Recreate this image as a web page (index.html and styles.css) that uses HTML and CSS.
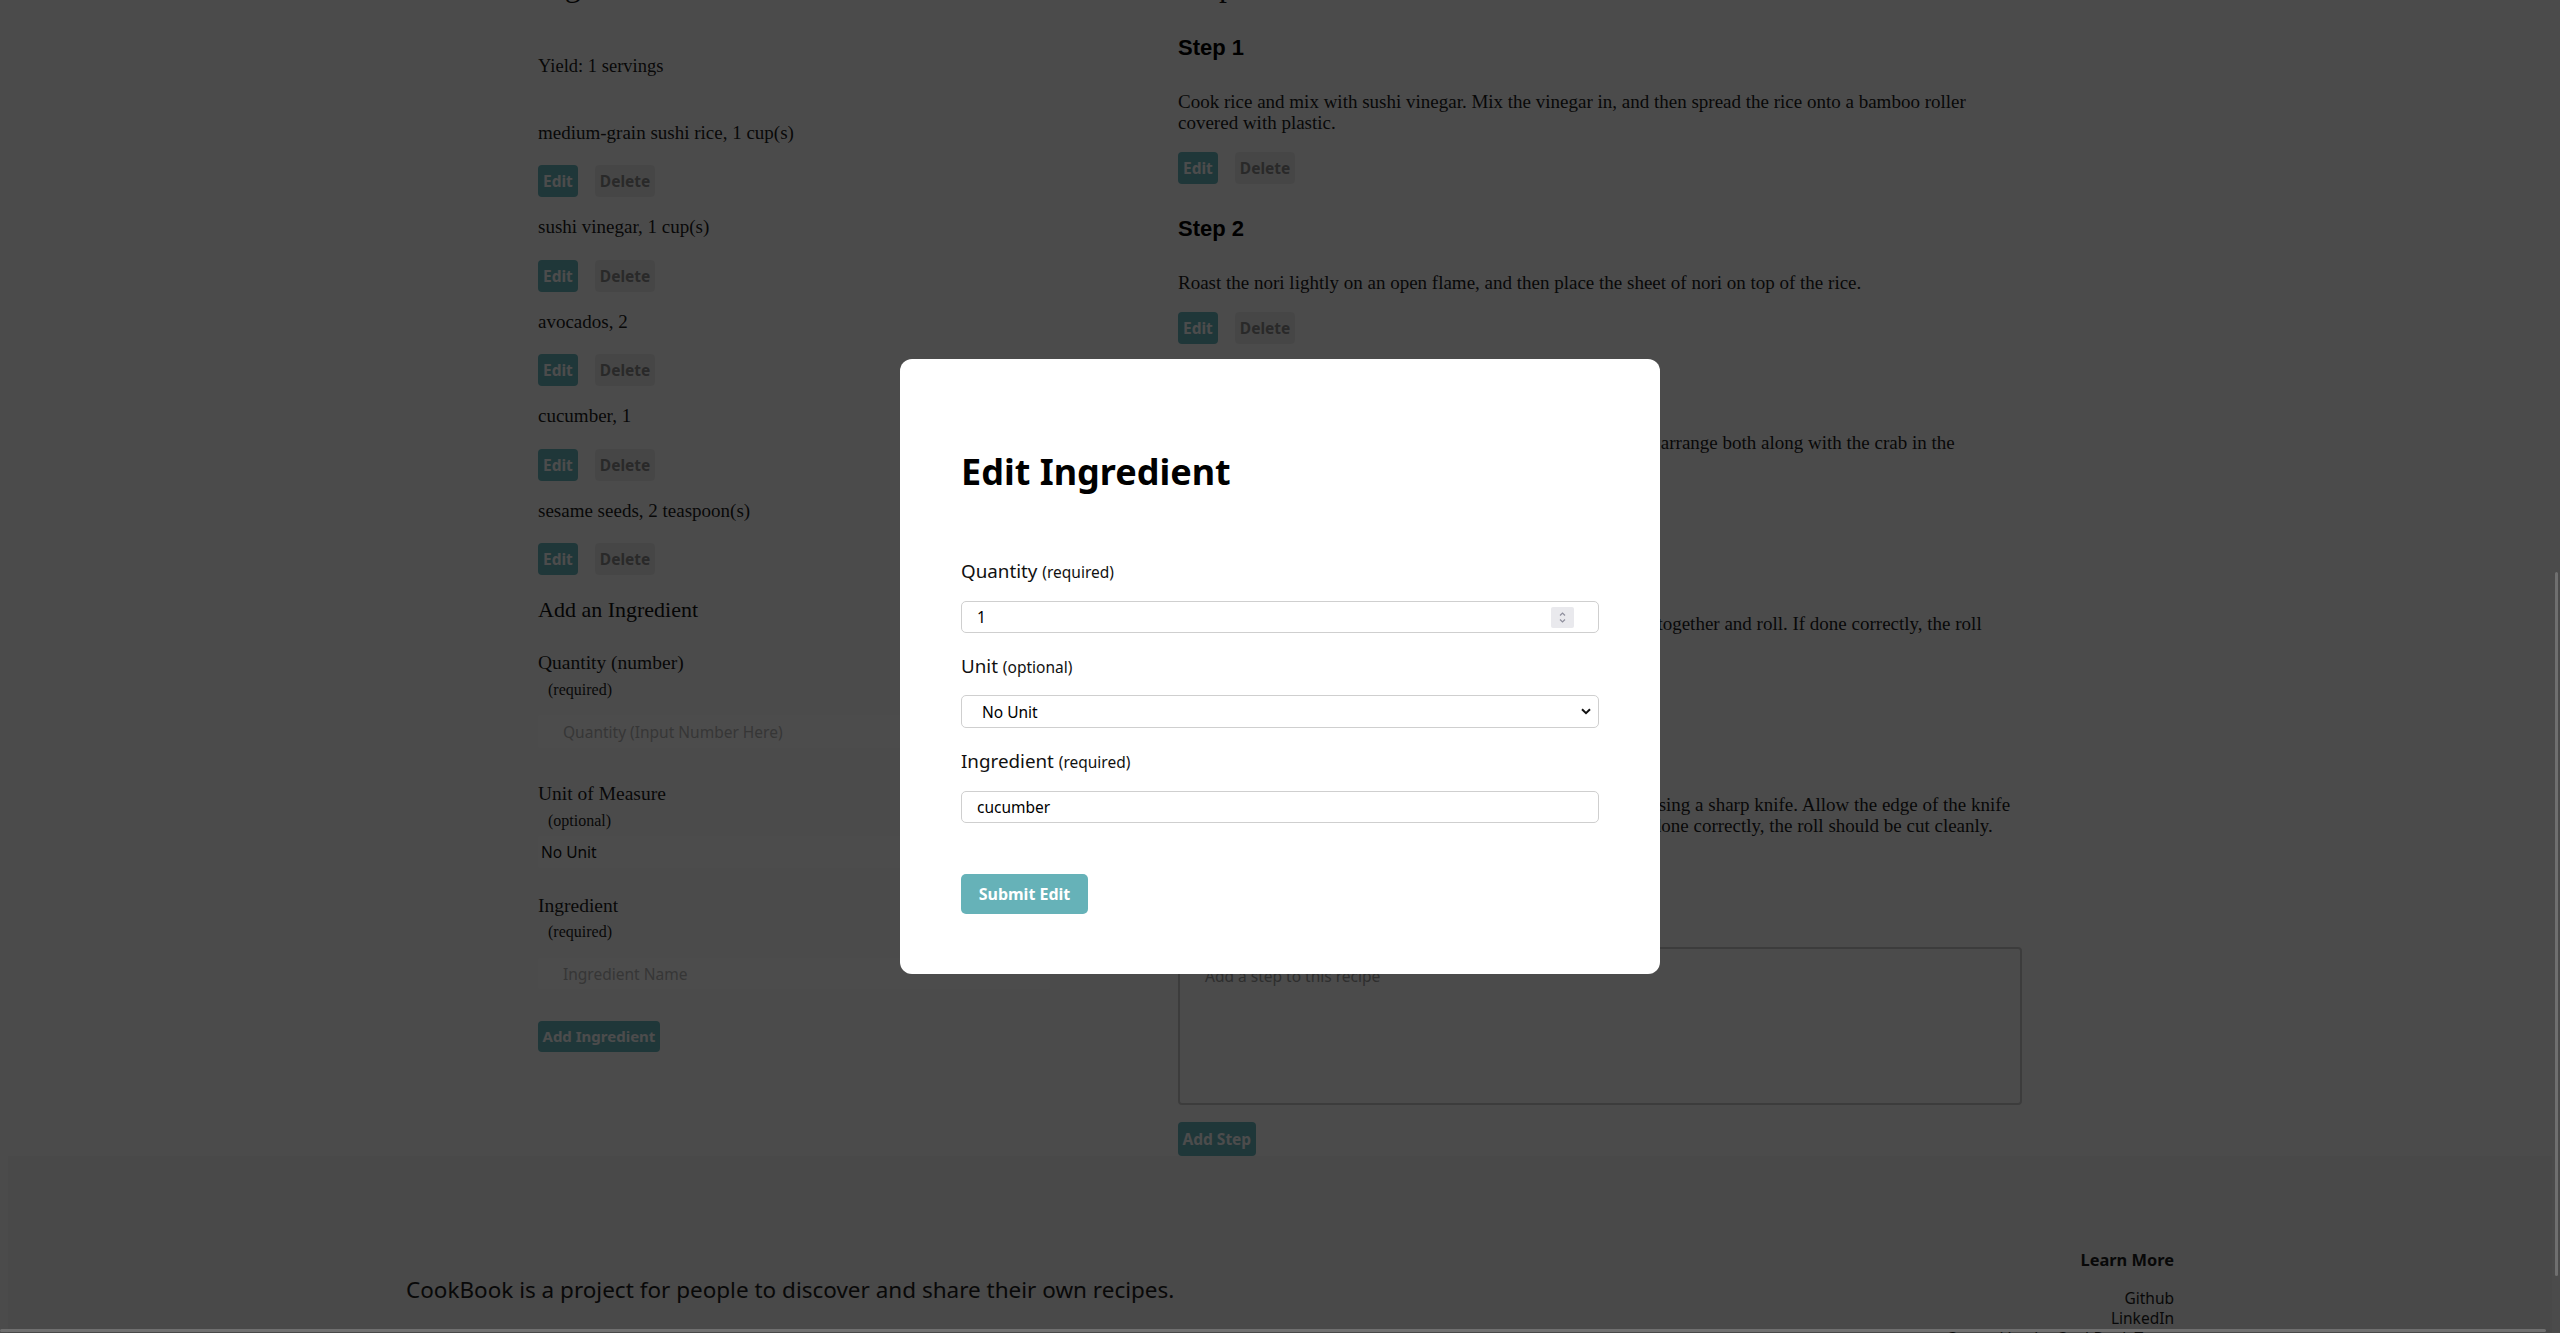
FILE: index.html
```html
<!DOCTYPE html>
<html lang="en">
<head>
<meta charset="utf-8">
<title>CookBook – Recipe</title>
<link rel="stylesheet" href="styles.css">
</head>
<body>
<main class="recipe">
  <section class="col col-ingredients">
    <h2 class="col-title">Ingredients</h2>
    <p class="yield">Yield: 1 servings</p>
    <ul class="ing-list">
      <li class="ing-item">
        <p class="ing-text">medium-grain sushi rice, 1 cup(s)</p>
        <div class="actions"><button class="btn btn-edit">Edit</button><button class="btn btn-delete">Delete</button></div>
      </li>
      <li class="ing-item">
        <p class="ing-text">sushi vinegar, 1 cup(s)</p>
        <div class="actions"><button class="btn btn-edit">Edit</button><button class="btn btn-delete">Delete</button></div>
      </li>
      <li class="ing-item">
        <p class="ing-text">avocados, 2</p>
        <div class="actions"><button class="btn btn-edit">Edit</button><button class="btn btn-delete">Delete</button></div>
      </li>
      <li class="ing-item">
        <p class="ing-text">cucumber, 1</p>
        <div class="actions"><button class="btn btn-edit">Edit</button><button class="btn btn-delete">Delete</button></div>
      </li>
      <li class="ing-item">
        <p class="ing-text">sesame seeds, 2 teaspoon(s)</p>
        <div class="actions"><button class="btn btn-edit">Edit</button><button class="btn btn-delete">Delete</button></div>
      </li>
    </ul>
    <form class="add-form">
      <h3 class="add-title">Add an Ingredient</h3>
      <div class="add-field add-field-qty">
        <label class="add-label">Quantity (number)<span class="add-note">(required)</span></label>
        <input class="add-input add-input-qty" type="text" placeholder="Quantity (Input Number Here)">
      </div>
      <div class="add-field add-field-unit">
        <label class="add-label">Unit of Measure<span class="add-note">(optional)</span></label>
        <select class="add-select"><option>No Unit</option></select>
      </div>
      <div class="add-field add-field-name">
        <label class="add-label">Ingredient<span class="add-note add-note-tight">(required)</span></label>
        <input class="add-input add-input-name" type="text" placeholder="Ingredient Name">
      </div>
      <button type="button" class="btn btn-edit btn-add">Add Ingredient</button>
    </form>
  </section>

  <section class="col col-steps">
    <h2 class="col-title">Steps</h2>
    <ol class="step-list">
      <li class="step">
        <h3 class="step-title">Step 1</h3>
        <p class="step-text">Cook rice and mix with sushi vinegar. Mix the vinegar in, and then spread the rice onto a bamboo roller covered with plastic.</p>
        <div class="actions"><button class="btn btn-edit">Edit</button><button class="btn btn-delete">Delete</button></div>
      </li>
      <li class="step">
        <h3 class="step-title">Step 2</h3>
        <p class="step-text">Roast the nori lightly on an open flame, and then place the sheet of nori on top of the rice.</p>
        <div class="actions"><button class="btn btn-edit">Edit</button><button class="btn btn-delete">Delete</button></div>
      </li>
      <li class="step">
        <h3 class="step-title">Step 3</h3>
        <p class="step-text">Slice the cucumber and avocado into long, thin strips, and then arrange both along with the crab in the horizontal center of the nori.</p>
        <div class="actions"><button class="btn btn-edit">Edit</button><button class="btn btn-delete">Delete</button></div>
      </li>
      <li class="step">
        <h3 class="step-title">Step 4</h3>
        <p class="step-text">Using the bamboo roller, carefully press the ingredients firmly together and roll. If done correctly, the roll should stay tightly closed.</p>
        <div class="actions"><button class="btn btn-edit">Edit</button><button class="btn btn-delete">Delete</button></div>
      </li>
      <li class="step">
        <h3 class="step-title">Step 5</h3>
        <p class="step-text">Once the roll is complete, gently cut it into eight equal pieces using a sharp knife. Allow the edge of the knife to do the work rather than pressing down firmly on the roll. If done correctly, the roll should be cut cleanly.</p>
        <div class="actions"><button class="btn btn-edit">Edit</button><button class="btn btn-delete">Delete</button></div>
      </li>
    </ol>
    <form class="step-form">
      <h3 class="step-form-title">Add a Step</h3>
      <textarea class="step-area" placeholder="Add a step to this recipe"></textarea>
      <button type="button" class="btn btn-edit btn-add-step">Add Step</button>
    </form>
  </section>
</main>

<footer class="site-footer">
  <p class="footer-about">CookBook is a project for people to discover and share their own recipes.</p>
  <div class="footer-links">
    <h4 class="footer-head">Learn More</h4>
    <a class="footer-link" href="#">Github</a>
    <a class="footer-link" href="#">LinkedIn</a>
    <a class="footer-link" href="#">Created by the CookBook Team</a>
  </div>
</footer>

<div class="backdrop">
  <div class="modal" role="dialog" aria-label="Edit Ingredient">
    <h2 class="modal-title">Edit Ingredient</h2>
    <label class="m-label m-label-first">Quantity <span class="m-note">(required)</span></label>
    <div class="m-box m-box-num">
      <input class="m-input" type="text" value="1">
      <span class="spinner">
        <svg width="23" height="21" viewBox="0 0 23 21"><path d="M9 8.5 L11.5 6 L14 8.5" fill="none" stroke="#8f8f9d" stroke-width="1.2"/><path d="M9 12.5 L11.5 15 L14 12.5" fill="none" stroke="#8f8f9d" stroke-width="1.2"/></svg>
      </span>
    </div>
    <label class="m-label m-label-unit">Unit <span class="m-note">(optional)</span></label>
    <div class="m-box m-box-select">
      <select class="m-select"><option>No Unit</option></select>
      <svg class="m-chevron" width="10" height="7" viewBox="0 0 10 7"><path d="M1 1.2 L5 5.2 L9 1.2" fill="none" stroke="#111" stroke-width="2"/></svg>
    </div>
    <label class="m-label m-label-ing">Ingredient <span class="m-note">(required)</span></label>
    <div class="m-box m-box-text">
      <input class="m-input" type="text" value="cucumber">
    </div>
    <button type="button" class="m-submit">Submit Edit</button>
  </div>
</div>

<div class="scroll-thumb scroll-thumb-v"></div>
<div class="scroll-thumb scroll-thumb-h"></div>
</body>
</html>
```
FILE: styles.css
```css
html, body {
  background: #fcfcfc;
}
body {
  margin: 0 8px;
  overflow: hidden;
  font-family: "Liberation Serif", "Times New Roman", serif;
  color: #1c1c1c;
}

/* ---------- recipe page ---------- */
.recipe {
  width: 1484px;
  margin: -34px auto 0;
  display: grid;
  grid-template-columns: 640px 844px;
}
.col-title {
  margin: 0;
  font: 400 32px/38px "Liberation Serif", serif;
  color: #111;
}
.yield {
  margin: 48.5px 0 39px;
  font-size: 18.5px;
  line-height: 27px;
}
.ing-list, .step-list {
  list-style: none;
  margin: 0;
  padding: 0;
}
.ing-item {
  margin-bottom: 16px;
}
.ing-text {
  margin: 0 0 19.5px;
  font-size: 19px;
  line-height: 27px;
}
.actions {
  display: flex;
  gap: 17px;
  height: 32px;
}
.btn {
  height: 32px;
  padding: 0 5px;
  border: 0;
  border-radius: 4px;
  font: 700 15.5px/32px "Noto Sans", sans-serif;
  cursor: pointer;
}
.btn-edit {
  background: #68b8bf;
  color: #ffffff;
}
.btn-delete {
  background: #ececec;
  color: #8a8a8a;
}

/* add ingredient form */
.add-form {
  display: flex;
  flex-direction: column;
  align-items: flex-start;
}
.add-title {
  margin: 6px 0 0;
  font: 400 22px/26px "Liberation Serif", serif;
  color: #111;
}
.add-field {
  display: flex;
  flex-direction: column;
  align-items: flex-start;
}
.add-field-qty { margin-top: 28px; }
.add-field-unit { margin-top: 34px; }
.add-field-name { margin-top: 26px; }
.add-label {
  display: block;
  font-size: 19.5px;
  line-height: 24px;
  color: #1c1c1c;
}
.add-note {
  display: block;
  margin-top: 4.5px;
  padding-left: 10px;
  font-size: 16px;
  line-height: 19px;
}
.add-note-tight { margin-top: 3.5px; }
.add-input, .add-select {
  box-sizing: border-box;
  width: 512px;
  border: 0;
  border-radius: 4px;
  background: #ffffff;
  font: 400 15.5px "Noto Sans", sans-serif;
  color: #111;
}
.add-input {
  padding: 0 25px;
}
.add-input::placeholder {
  color: #b5b5b5;
}
.add-input-qty { margin-top: 16.5px; height: 33px; }
.add-input-name { margin-top: 17.5px; height: 31px; }
.add-select {
  margin-top: 6.5px;
  height: 32px;
  padding: 0 3px;
  appearance: none;
  -webkit-appearance: none;
}
.btn-add {
  margin-top: 32px;
  height: 31px;
  line-height: 31px;
  padding: 0 4.5px;
  font-size: 15px;
}

/* steps */
.step-list {
  margin-top: 31px;
}
.step + .step {
  margin-top: 32px;
}
.step-title {
  margin: 0;
  font: 700 22px/26px "Liberation Sans", Arial, sans-serif;
  color: #000;
}
.step-text {
  margin: 29.5px 0 19.5px;
  font-size: 19px;
  line-height: 21px;
}
.step-form {
  display: flex;
  flex-direction: column;
  align-items: flex-start;
  margin-top: 20px;
}
.step-form-title {
  margin: 0;
  font: 700 22px/26px "Liberation Sans", Arial, sans-serif;
  color: #000;
}
.step-area {
  box-sizing: border-box;
  width: 844px;
  height: 158px;
  margin-top: 14px;
  padding: 16px 25px;
  border: 2px solid #c8c8c8;
  border-radius: 4px;
  background: #fcfcfc;
  resize: none;
  font: 400 15.5px/22px "Noto Sans", sans-serif;
}
.step-area::placeholder {
  color: #9a9a9a;
}
.btn-add-step {
  margin-top: 17px;
  height: 34px;
  line-height: 34px;
  padding: 0 4.5px;
}

/* ---------- footer ---------- */
.site-footer {
  display: flex;
  justify-content: space-between;
  align-items: flex-start;
  padding: 93px 378px 40px 398px;
  background: #f3f3f3;
  font-family: "Noto Sans", sans-serif;
  color: #1c1c1c;
}
.footer-about {
  margin: 26px 0 0;
  font-size: 22.5px;
  line-height: 30px;
}
.footer-links {
  display: flex;
  flex-direction: column;
  align-items: flex-end;
}
.footer-head {
  margin: 0 0 17px;
  font: 700 16.4px/22px "Noto Sans", sans-serif;
}
.footer-link {
  font-size: 15.5px;
  line-height: 20px;
  color: #1c1c1c;
  text-decoration: none;
}

/* ---------- modal ---------- */
.backdrop {
  position: fixed;
  inset: 0;
  background: rgba(0, 0, 0, 0.7);
  display: flex;
  align-items: center;
  justify-content: center;
}
.modal {
  box-sizing: border-box;
  width: 760px;
  padding: 60px 61px;
  background: #ffffff;
  border-radius: 12px;
  display: flex;
  flex-direction: column;
  align-items: stretch;
  font-family: "Noto Sans", sans-serif;
  color: #000;
}
.modal-title {
  margin: 31px 0 0;
  font: 700 36px/44px "Noto Sans", sans-serif;
  color: #000;
}
.m-label {
  display: block;
  margin-top: 22px;
  font-size: 18.8px;
  line-height: 24px;
  color: #111;
}
.m-label-first { margin-top: 65px; }
.m-label-unit { margin-top: 21px; }
.m-label-ing { margin-top: 21px; }
.m-note {
  font-size: 15.5px;
}
.m-box {
  box-sizing: border-box;
  display: flex;
  align-items: center;
  border: 1px solid #cfcfcf;
  border-radius: 5px;
  background: #fff;
}
.m-box-num { margin-top: 17px; height: 32px; }
.m-box-select { margin-top: 16px; height: 33px; }
.m-box-text { margin-top: 17px; height: 32px; }
.m-input {
  flex: 1;
  min-width: 0;
  height: 100%;
  padding: 0 15px;
  border: 0;
  background: transparent;
  font: 400 15.5px "Noto Sans", sans-serif;
  color: #000;
  outline: none;
}
.spinner {
  display: flex;
  width: 23px;
  height: 21px;
  margin-right: 24px;
  background: #e9e9ed;
  border-radius: 2px;
}
.m-select {
  flex: 1;
  height: 100%;
  padding: 0 0 0 20px;
  border: 0;
  background: transparent;
  appearance: none;
  -webkit-appearance: none;
  font: 400 15.5px "Noto Sans", sans-serif;
  color: #000;
}
.m-chevron {
  margin-right: 7px;
}
.m-submit {
  align-self: flex-start;
  margin-top: 51px;
  width: 127px;
  height: 40px;
  border: 0;
  border-radius: 5px;
  background: #66b2b8;
  color: #fff;
  font: 700 16px/40px "Noto Sans", sans-serif;
  padding: 0;
}

/* overlay scrollbars */
.scroll-thumb {
  position: fixed;
  background: #6f6f6f;
  border-radius: 2px;
}
.scroll-thumb-v {
  left: 2555px;
  top: 572px;
  width: 3px;
  height: 704px;
}
.scroll-thumb-h {
  left: 0;
  top: 1329px;
  width: 2546px;
  height: 3px;
}
```
